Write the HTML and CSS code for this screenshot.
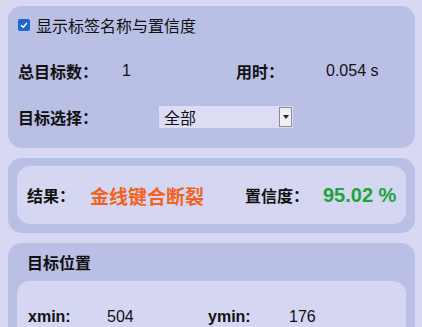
FILE: index.html
```html
<!DOCTYPE html>
<html lang="zh-CN">
<head>
  <meta charset="UTF-8" />
  <title>检测结果</title>
  <link rel="stylesheet" href="styles.css">
</head>
<body>
  <div class="panel panel-top">
    <div class="row row-check">
      <span class="check">
        <svg width="12" height="12" viewBox="0 0 12 12">
          <rect x="0" y="0" width="12" height="12" rx="2" fill="#1b68c8"/>
          <path d="M3 6.2 L5.1 8.2 L9 3.9" stroke="#fff" stroke-width="1.5" fill="none"/>
        </svg>
      </span>
      <span>显示标签名称与置信度</span>
    </div>
    <div class="row row-stats">
      <span class="label">总目标数：</span>
      <span class="value">1</span>
      <span class="label">用时：</span>
      <span class="value">0.054 s</span>
    </div>
    <div class="row row-select">
      <span class="label select-label">目标选择：</span>
      <div class="combo">
        <span class="combo-text">全部</span>
        <span class="combo-btn">
          <svg width="6" height="4" viewBox="0 0 6 4"><path d="M0 0 L6 0 L3 4 Z" fill="#222"/></svg>
        </span>
      </div>
    </div>
  </div>

  <div class="panel panel-result">
    <div class="card result-card">
      <span class="label">结果：</span>
      <span class="result-name">金线键合断裂</span>
      <span class="label">置信度：</span>
      <span class="result-conf">95.02 %</span>
    </div>
  </div>

  <div class="panel panel-pos">
    <div class="pos-title">目标位置</div>
    <div class="card pos-card">
      <div class="pos-row">
        <span class="label latin">xmin:</span>
        <span class="value latin">504</span>
        <span class="label latin">ymin:</span>
        <span class="value latin">176</span>
      </div>
    </div>
  </div>
</body>
</html>
```

FILE: styles.css
```css
body {
  margin: 0;
  height: 327px;
  background-color: #d8d8f3;
  font-family: "Liberation Sans", "Noto Sans CJK SC", sans-serif;
  font-size: 16px;
  color: #111;
  overflow: hidden;
}

.panel {
  margin: 0 7px 0 8px;
  background-color: #b9bfe5;
  border-radius: 14px;
}

.panel-top {
  margin-top: 6px;
  padding: 0 10px 8px 10px;
}

.row {
  display: flex;
  align-items: center;
}

.row-check {
  height: 38px;
  margin-bottom: 4px;
}

.check {
  display: flex;
  width: 12px;
  height: 12px;
  margin-right: 6px;
}

.row-stats {
  height: 46px;
  display: grid;
  grid-template-columns: 104px 114px 90px auto;
  align-items: center;
}

.row-select {
  height: 46px;
}

.label {
  font-weight: bold;
}

.select-label {
  width: 141px;
}

.combo {
  display: flex;
  align-items: center;
  width: 134px;
  height: 22px;
  background-color: #dcdcf5;
}

.combo-text {
  flex: 1;
  padding-left: 5px;
}

.combo-btn {
  display: flex;
  align-items: center;
  justify-content: center;
  width: 13px;
  height: 20px;
  background-color: #f0f0f0;
  border: 1px solid #8a8a9a;
  box-sizing: border-box;
  margin-right: 1px;
}

.panel-result {
  margin-top: 10px;
  padding: 8px 9px 9px 9px;
}

.card {
  background-color: #d4d6f2;
  border-radius: 13px;
}

.result-card {
  height: 58px;
  display: grid;
  grid-template-columns: 63px 155px 78px auto;
  align-items: center;
  padding-left: 10px;
}

.result-name {
  color: #f2621f;
  font-weight: bold;
  font-size: 19px;
}

.result-conf {
  color: #1ea43a;
  font-weight: bold;
  font-size: 20px;
}

.panel-pos {
  margin-top: 10px;
  padding: 0 9px;
  height: 84px;
  border-radius: 14px 14px 0 0;
  overflow: hidden;
}

.pos-title {
  height: 38px;
  display: flex;
  align-items: center;
  padding-left: 10px;
  font-weight: bold;
}

.pos-card {
  height: 46px;
  box-sizing: border-box;
  padding: 22px 0 0 11px;
  border-radius: 13px 13px 0 0;
}

.pos-row {
  display: grid;
  grid-template-columns: 79px 101px 81px auto;
  align-items: center;
  height: 28px;
}
```
